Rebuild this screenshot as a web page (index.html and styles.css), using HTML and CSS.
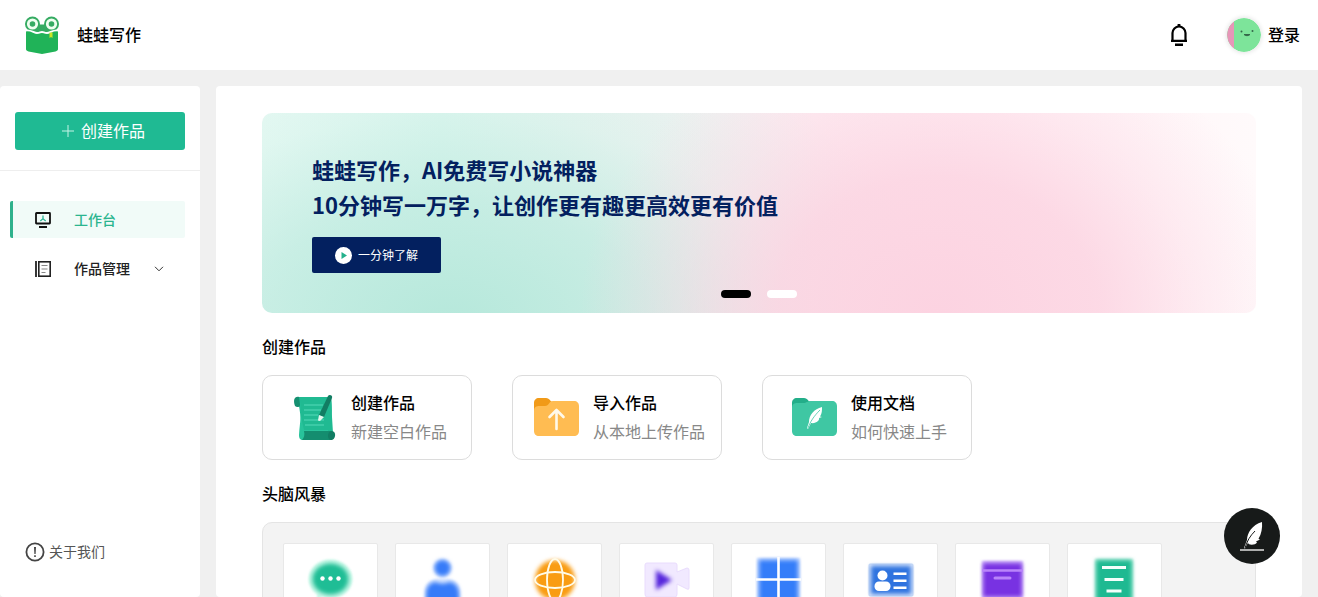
FILE: index.html
```html
<!DOCTYPE html>
<html lang="zh-CN">
<head>
<meta charset="utf-8">
<meta name="viewport" content="width=device-width, initial-scale=1">
<title>蛙蛙写作</title>
<link rel="stylesheet" href="styles.css">
</head>
<body>
<header class="topbar">
  <a class="brand" href="#">
    <svg class="brand-logo" viewBox="0 0 34 38" aria-hidden="true">
      <circle cx="7.500" cy="8" r="7.500" fill="#35ab62"/><circle cx="26.500" cy="8" r="7.500" fill="#35ab62"/>
      <path d="M6 7c7 2 15 2 22 0v9H4z" fill="#35ab62"/>
      <circle cx="7.500" cy="8" r="4.200" fill="#35ab62" stroke="#effff0" stroke-width="2.800"/>
      <circle cx="26.500" cy="8" r="4.200" fill="#35ab62" stroke="#effff0" stroke-width="2.800"/>
      <path d="M1 15c5-1 8 2 11 2s3-1 5-1 2 1 5 1 6-3 11-2v18c0 1.500-1 2-2.500 2.400L17 38 3.500 35.400C2 35 1 34.500 1 33z" fill="#20b358"/>
      <path d="M1 14.500c5-1 8 2.500 11 2.500s3-1 5-1 2 1 5 1 6-3.500 11-2.500" fill="none" stroke="#fff" stroke-width="1.800"/>
      <path d="M24.500 16.500h3V22L26 21l-1.500 1z" fill="#c9e526"/>
    </svg>
    <span>蛙蛙写作</span>
  </a>
  <div class="account">
    <button class="bell" type="button" aria-label="通知">
      <svg viewBox="0 0 18 22" aria-hidden="true"><path d="M2.500 17V9a6.500 6.500 0 0 1 13 0v8" fill="none" stroke="#000" stroke-width="2.200"/><path d="M1 15.800h16V18H1zM5 19.500h8V22H5zM7.500 1a1.500 1.500 0 0 1 3 0v2h-3z"/></svg>
    </button>
    <button class="login" type="button">
      <svg class="avatar" viewBox="0 0 34 34" aria-hidden="true">
        <circle cx="17" cy="17" r="17" fill="#7de49a"/>
        <path d="M7 3.300a17 17 0 0 0 0 27.400z" fill="#e796b8"/>
        <circle cx="14.500" cy="13.500" r="1" fill="#35684a"/><circle cx="25.500" cy="13" r="1" fill="#35684a"/>
        <path d="M17 16.500c1.500 1.600 4.500 1.600 6 0z" fill="#35684a" stroke="#35684a"/>
      </svg>
      <span>登录</span>
    </button>
  </div>
</header>
<div class="layout">
  <aside class="sidebar">
    <div class="create-area">
      <button class="create" type="button">
        <svg viewBox="0 0 12 12" aria-hidden="true"><path d="M6 0v12M0 6h12" stroke="#c6f3e6" stroke-width="1"/></svg>
        <span>创建作品</span>
      </button>
    </div>
    <nav class="menu">
      <a class="menu-item active" href="#">
        <svg class="menu-icon" viewBox="0 0 16 16" fill="none" aria-hidden="true"><rect x="1" y="1" width="14" height="10.500" rx=".5" stroke="#111" stroke-width="1.800"/><path d="M4 15h8" stroke="#111" stroke-width="2"/><path d="M8 3.500v3.300L5.300 9M8 6.800 10.700 9" stroke="#2fb594" stroke-width="1.300"/></svg>
        <span>工作台</span>
      </a>
      <a class="menu-item" href="#">
        <svg class="menu-icon" viewBox="0 0 16 16" fill="none" aria-hidden="true"><path d="M1 0v16" stroke="#222" stroke-width="1.800"/><rect x="3.800" y=".8" width="11.400" height="14.400" stroke="#222" stroke-width="1.600"/><path d="M6.500 4.500h6M6.500 8h6M6.500 11.500h4" stroke="#888" stroke-width="1.200"/></svg>
        <span>作品管理</span>
        <svg class="chevron" viewBox="0 0 10 6" fill="none" aria-hidden="true"><path d="m1 .8 4 4 4-4" stroke="#333"/></svg>
      </a>
    </nav>
    <a class="about" href="#">
      <svg viewBox="0 0 20 20" aria-hidden="true"><circle cx="10" cy="10" r="8.600" fill="none" stroke="#444" stroke-width="1.800"/><path d="M9 5h2l-.4 7H9.400zM9.200 13.300h1.600V15H9.200z" fill="#444"/></svg>
      <span>关于我们</span>
    </a>
  </aside>
  <main class="content">
    <section class="banner">
      <h1>蛙蛙写作，AI免费写小说神器<br>10分钟写一万字，让创作更有趣更高效更有价值</h1>
      <button class="watch" type="button">
        <svg viewBox="0 0 17 17" aria-hidden="true"><circle cx="8.500" cy="8.500" r="8.500" fill="#fff"/><path d="m6.500 5 5.500 3.500L6.500 12z" fill="#24b18c"/></svg>
        <span>一分钟了解</span>
      </button>
      <div class="dots">
        <button class="dot current" type="button" aria-label="第 1 张"></button>
        <button class="dot" type="button" aria-label="第 2 张"></button>
      </div>
    </section>

    <h2>创建作品</h2>
    <div class="actions">
      <a class="action" href="#">
        <svg class="action-icon" viewBox="0 0 50 50" aria-hidden="true">
          <path d="M10 5h34c1 4 1 12 1 20l1 16-32 5c1-8 0-26-4-41z" fill="#20ba92"/>
          <path d="M13 9c2 12 0 20-1 34 0 3 1 5 4 5h25V38H17c-2-8-4-19-4-29z" fill="#28c39b"/>
          <path d="M12 5c-5-1-6 4-4 9 2 2 5 1 5-1z" fill="#158f70"/>
          <path d="M17 39h28v9H15c2-2 3-5 2-9z" fill="#148d6f"/>
          <path d="M44 39c6-1 5 9 0 9-4 0-4-8 0-9z" fill="#127d63"/>
          <path d="M17 13h19M17 18h17M17 23h14M17 28h20M18 33h19" stroke="#54dab9" stroke-width="1"/>
          <path d="M41 4c1-2 5-1 4 2l-8 19-5-2z" fill="#127d63"/><path d="m32 23 5 2-4 4-2-.5z" fill="#e6f8ef"/>
        </svg>
        <span class="action-text"><strong>创建作品</strong><span>新建空白作品</span></span>
      </a>
      <a class="action" href="#">
        <svg class="action-icon" viewBox="0 0 50 50" aria-hidden="true">
          <path d="M5 19v-8c0-3 2-5 5-5h7c4 0 4 4 7 4v9z" fill="#f19a18"/>
          <path d="M5 19c0-4 2-5 6-5h5c4 0 4-5 8-5h21c3 0 5 2 5 5v25c0 3-2 5-5 5H10c-3 0-5-2-5-5z" fill="#ffbc52"/>
          <path d="M27.500 37V18M20.500 25l7-7 7 7" fill="none" stroke="#fff9ea" stroke-width="2.600" stroke-linecap="round" stroke-linejoin="round"/>
        </svg>
        <span class="action-text"><strong>导入作品</strong><span>从本地上传作品</span></span>
      </a>
      <a class="action" href="#">
        <svg class="action-icon" viewBox="0 0 50 50" aria-hidden="true">
          <path d="M5 19v-8c0-3 2-5 5-5h7c4 0 4 4 7 4v9z" fill="#23ae89"/>
          <path d="M5 16c0-4 2-5 6-5h5c4 0 4-2 8-2h21c3 0 5 2 5 5v25c0 3-2 5-5 5H10c-3 0-5-2-5-5z" fill="#3fc7a3"/>
          <path d="M35 15c-8 2-13 8-13 15l-2 6 1 1 3-6c5 1 9-3 8-5l3-1-2-.5c2-3 2-6 2-9.500z" fill="#fff"/><path d="M21 36c2-6 6-12 12-18" fill="none" stroke="#3fc7a3" stroke-width=".8"/>
        </svg>
        <span class="action-text"><strong>使用文档</strong><span>如何快速上手</span></span>
      </a>
    </div>

    <h2>头脑风暴</h2>
    <div class="tools">
      <a class="tool" href="#" aria-label="对话"><svg viewBox="0 0 48 48" aria-hidden="true">
        <g class="halo"><ellipse cx="23.500" cy="24" rx="22" ry="19.500" fill="#c5f8e7"/><path d="M10 37h12l-12 8z" fill="#c5f8e7"/></g>
        <ellipse class="soft" cx="23.500" cy="24" rx="18" ry="15.500" fill="#1fbd95"/><g fill="#fff"><circle cx="15.500" cy="23.500" r="2.200"/><circle cx="23.500" cy="23.500" r="2.200"/><circle cx="31.500" cy="23.500" r="2.200"/></g></svg></a>
      <a class="tool" href="#" aria-label="人物"><svg viewBox="0 0 48 48" aria-hidden="true"><g class="halo" fill="#d6e5ff"><circle cx="23.500" cy="13" r="9"/><rect x="6" y="24" width="35" height="30" rx="12"/></g><g class="soft" fill="#367bf8"><circle cx="23.500" cy="13" r="8"/><path d="M7 48V39c0-8 5-12 10-12 4 2 9 2 13 0 5 0 10 4 10 12v9z"/></g></svg></a>
      <a class="tool" href="#" aria-label="世界"><svg viewBox="0 0 48 48" aria-hidden="true"><circle class="soft" cx="24" cy="25" r="20" fill="#f99c12"/><g fill="none" stroke="#fffbe8" stroke-width="1.800"><ellipse cx="24" cy="25" rx="20" ry="8"/><ellipse cx="24" cy="25" rx="8" ry="21"/></g></svg></a>
      <a class="tool" href="#" aria-label="视频"><svg viewBox="0 0 48 48" aria-hidden="true"><path d="M4 8h28q2 0 2 2v7l10-4q2 0 2 2v18q0 2-2 1l-10-5v10q0 3-2 3H4q-2 0-2-3V10q0-2 2-2z" fill="#f1e9ff" stroke="#e9dcfd"/><path class="soft" d="m13 15 16 10-16 10z" fill="#5525dc"/></svg></a>
      <a class="tool" href="#" aria-label="宫格"><svg viewBox="0 0 48 48" aria-hidden="true"><rect class="halo" x="2" y="3" width="43" height="46" fill="#cadcff"/><rect class="soft" x="4" y="5" width="39" height="41" fill="#347df9"/><path d="M23.500 2v46M1 24.500h45" stroke="#fff" stroke-width="2.600"/></svg></a>
      <a class="tool" href="#" aria-label="名片"><svg viewBox="0 0 48 48" aria-hidden="true"><rect x="2" y="9" width="44" height="32" rx="1" fill="#d9e6fc" stroke="#c5d8f6"/><rect class="soft" x="4" y="11" width="40" height="28" fill="#2f73df"/><g fill="#fff"><circle cx="15.500" cy="20.500" r="5"/><rect x="7.500" y="26.500" width="16" height="9.500" rx="4.500"/><path d="M26.500 17.500h13V20h-13zM26.500 24.500h13V27h-13zM26.500 31.500h13V34h-13z"/></g></svg></a>
      <a class="tool" href="#" aria-label="收纳"><svg viewBox="0 0 48 48" aria-hidden="true"><rect class="halo" x="3" y="6" width="41" height="38" fill="#d7bdfc"/><rect class="soft" x="4" y="8" width="39" height="34" fill="#7832e2"/><path d="M3 15.500h41" stroke="#b984fa" stroke-width="2.400"/><path d="M16 23h15" stroke="#b984fa" stroke-width="3" stroke-linecap="round"/></svg></a>
      <a class="tool" href="#" aria-label="大纲"><svg viewBox="0 0 48 48" aria-hidden="true"><rect class="halo" x="4" y="4" width="38" height="45" fill="#baf0df"/><rect class="soft" x="5" y="5" width="36" height="44" fill="#1eb991"/><path d="M11 12.500h24M13.500 24.500h19M15.500 36h15" stroke="#f4fffb" stroke-width="3"/></svg></a>
    </div>
  </main>
</div>
<button class="float" type="button" aria-label="写作">
  <svg viewBox="0 0 28 32" aria-hidden="true"><path d="M24 2C14 5 9 13 9 20l-3 8 1 .5 3-6c0 3 7 3 9 0l-1-1 4-2-1.500-.8C23.500 14 24.500 8 24 2z" fill="#fff"/><path d="M7 28c2-7 5-12 10-17" fill="none" stroke="#171a19"/><path d="M2 30h24" stroke="#fff" stroke-width="1.300"/></svg>
</button>
</body>
</html>
```
FILE: styles.css
```css
* {
  box-sizing: border-box;
}

body {
  display: flex;
  flex-direction: column;
  height: 100vh;
  margin: 0;
  overflow: hidden;
  background: #f0f0f0;
  color: #000;
  font: 16px/24px "Noto Sans CJK SC", sans-serif;
}

button {
  padding: 0;
  border: 0;
  background: none;
  color: inherit;
  font: inherit;
  cursor: pointer;
}

a {
  color: inherit;
  text-decoration: none;
}

svg {
  display: block;
  flex: none;
}

.topbar {
  display: flex;
  flex: none;
  align-items: center;
  justify-content: space-between;
  height: 70px;
  padding: 0 18px 0 25px;
  background: #fff;
  font-weight: 500;
}

.brand {
  display: flex;
  align-items: center;
  gap: 18px;
}

.brand span,
.login span,
.create span,
.menu span,
.about span {
  padding-bottom: 2px;
}

.brand-logo {
  width: 34px;
  height: 38px;
}

.account {
  display: flex;
  align-items: center;
  gap: 39px;
}

.bell svg {
  width: 18px;
  height: 22px;
}

.login {
  display: flex;
  align-items: center;
  gap: 7px;
}

.avatar {
  width: 34px;
  height: 34px;
  border-radius: 50%;
  box-shadow: 0 0 4px 1px #e6e6e6;
}

.layout {
  display: flex;
  flex: 1;
  gap: 16px;
  min-height: 0;
  padding: 16px 16px 0 0;
}

.sidebar {
  display: flex;
  flex: none;
  flex-direction: column;
  width: 200px;
  border-radius: 4px;
  background: #fff;
}

.create-area {
  padding: 26px 15px 20px;
  border-bottom: 1px solid #eee;
}

.create {
  display: flex;
  align-items: center;
  justify-content: center;
  gap: 7px;
  width: 100%;
  height: 38px;
  padding-left: 7px;
  border-radius: 3px;
  background: #1fba93;
  color: #fff;
}

.create svg {
  width: 12px;
  height: 12px;
}

.menu {
  display: flex;
  flex-direction: column;
  gap: 12px;
  padding: 30px 15px 0 10px;
  font-size: 14px;
  font-weight: 500;
}

.menu-item {
  display: flex;
  align-items: center;
  height: 37px;
  padding-left: 22px;
  border-left: 3px solid transparent;
  border-radius: 2px;
  color: #222;
}

.menu-item.active {
  border-left-color: #2fb18c;
  background: #f1fbf8;
  color: #2bb58f;
}

.menu-icon {
  width: 16px;
  height: 16px;
  margin-right: 23px;
}

.chevron {
  width: 10px;
  height: 6px;
  margin-left: 24px;
}

.about {
  display: flex;
  align-items: center;
  gap: 4px;
  margin-top: auto;
  padding: 0 25px 32px;
  color: #555;
  font-size: 14px;
}

.about svg {
  width: 20px;
  height: 20px;
}

.content {
  flex: 1;
  min-width: 0;
  padding: 27px 46px 0;
  overflow: hidden;
  border-radius: 4px;
  background: #fff;
}

.banner {
  position: relative;
  height: 200px;
  padding: 39px 50px 0;
  border-radius: 10px;
  background:
    radial-gradient(ellipse 36% 150% at 68% 100%, #fcd3e1 0, #fcd3e1d0 45%, #fcd6e366 72%, #fdd2e000 100%),
    radial-gradient(ellipse 50% 150% at 19% 105%, #b6e8db 0, #bbeadeb0 40%, #c5f0e440 70%, #c5f0e500 100%),
    linear-gradient(90deg, #e9f9f4 0, #dcf5ee 18%, #e6f3ef 32%, #f3f1f2 46%, #fdeef3 56%, #fff0f5 72%, #fff7f9 90%, #fffafb 100%);
}

.banner h1 {
  margin: 0 0 15px;
  color: #03205f;
  font-size: 22px;
  font-weight: 700;
  line-height: 35px;
}

.watch {
  display: flex;
  align-items: center;
  justify-content: center;
  gap: 6px;
  width: 129px;
  height: 36px;
  border-radius: 2px;
  background: #03205f;
  color: #fff;
  font-size: 12px;
}

.watch svg {
  width: 17px;
  height: 17px;
}

.dots {
  position: absolute;
  right: 0;
  bottom: 15px;
  left: 0;
  display: flex;
  justify-content: center;
  gap: 16px;
}

.dot {
  width: 30px;
  height: 8px;
  border-radius: 4px;
  background: #fff;
}

.dot.current {
  background: #000;
}

h2 {
  margin: 21px 0 17px;
  font-size: 16px;
  font-weight: 500;
  line-height: 24px;
}

.actions {
  display: flex;
  gap: 40px;
}

.action {
  display: flex;
  align-items: center;
  justify-content: center;
  gap: 14px;
  width: 210px;
  height: 85px;
  padding-bottom: 2px;
  border: 1px solid #dcdcdc;
  border-radius: 10px;
}

.action-icon {
  width: 50px;
  height: 50px;
}

.action-text {
  display: flex;
  flex-direction: column;
  gap: 5px;
  color: #888;
}

.action-text strong {
  color: #000;
  font-weight: 500;
}

.tools {
  display: flex;
  flex-wrap: wrap;
  gap: 17px;
  padding: 20px;
  border: 1px solid #e4e4e4;
  border-radius: 10px;
  background: #f3f3f3;
}

.tool {
  display: flex;
  justify-content: center;
  width: 95px;
  height: 110px;
  padding-top: 11px;
  border: 1px solid #e8e8e8;
  border-radius: 2px;
  background: #fff;
}

.tool svg {
  width: 48px;
  height: 48px;
}

.halo {
  filter: blur(1px);
}

.soft {
  filter: blur(2px);
}

.float {
  position: fixed;
  right: 38px;
  bottom: 33px;
  display: flex;
  align-items: center;
  justify-content: center;
  width: 56px;
  height: 56px;
  border-radius: 50%;
  background: #171a19;
}

.float svg {
  width: 28px;
  height: 32px;
}
```
